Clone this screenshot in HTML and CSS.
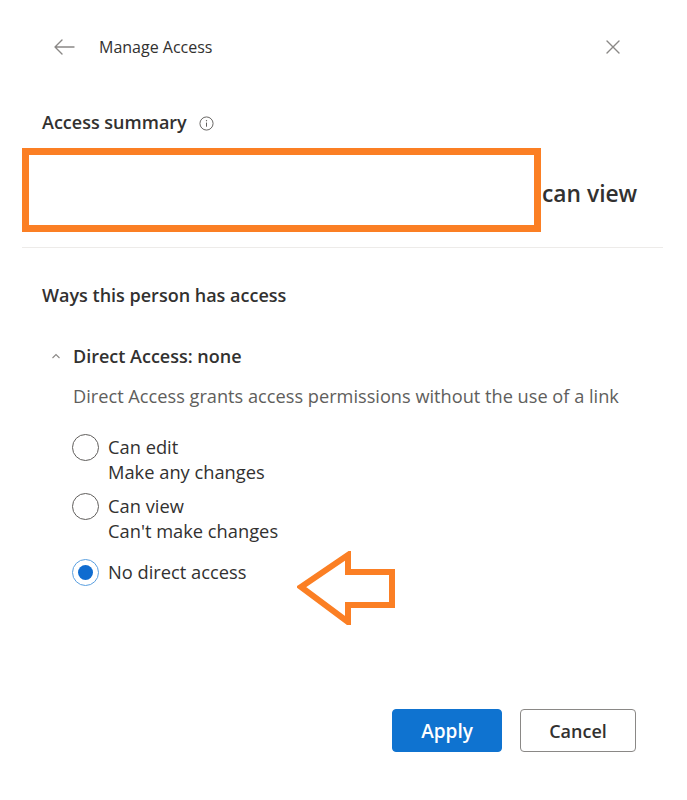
FILE: index.html
```html
<!DOCTYPE html>
<html lang="en">
<head>
<meta charset="utf-8">
<title>Manage Access</title>
<link rel="stylesheet" href="styles.css">
</head>
<body>
<div class="panel">
  <header class="topbar">
    <svg class="back" width="22" height="16" viewBox="0 0 22 16"><path d="M21 8H2M9 1L2 8l7 7" fill="none" stroke="#8a8886" stroke-width="1.4" stroke-linecap="round" stroke-linejoin="round"/></svg>
    <span class="title">Manage Access</span>
    <svg class="close" width="14" height="14" viewBox="0 0 14 14"><path d="M1 1l12 12M13 1L1 13" fill="none" stroke="#8a8886" stroke-width="1.4" stroke-linecap="round"/></svg>
  </header>

  <div class="summary-head">
    <span class="h2">Access summary</span>
    <svg class="info" width="15" height="15" viewBox="0 0 16 16"><circle cx="8" cy="8" r="7" fill="none" stroke="#605e5c" stroke-width="1"/><path d="M8 7v4.4" stroke="#605e5c" stroke-width="1.1"/><circle cx="8" cy="5" r="0.7" fill="#605e5c"/></svg>
  </div>

  <div class="summary-row">
    <div class="redact"></div>
    <span class="perm">can view</span>
  </div>
  <div class="divider"></div>

  <div class="ways">Ways this person has access</div>

  <div class="direct">
    <svg class="chev" width="10" height="6" viewBox="0 0 10 6"><path d="M1.5 5L5 1.5 8.5 5" fill="none" stroke="#8a8886" stroke-width="1.1"/></svg>
    <span class="direct-title">Direct Access: none</span>
  </div>
  <p class="desc">Direct Access grants access permissions without the use of a link</p>

  <div class="options">
    <div class="opt">
      <span class="radio"></span>
      <div class="opt-text"><div>Can edit</div><div>Make any changes</div></div>
    </div>
    <div class="opt">
      <span class="radio"></span>
      <div class="opt-text"><div>Can view</div><div>Can't make changes</div></div>
    </div>
    <div class="opt opt-last">
      <span class="radio checked"></span>
      <div class="opt-text"><div>No direct access</div></div>
      <svg class="callout" width="100" height="74" viewBox="0 0 100 74"><path d="M4 36L51 4V21H95V54H51V71Z" fill="none" stroke="#fb7f24" stroke-width="6" stroke-linejoin="miter"/></svg>
    </div>
  </div>

  <div class="actions">
    <button class="btn primary">Apply</button>
    <button class="btn secondary">Cancel</button>
  </div>
</div>
</body>
</html>
```

FILE: styles.css
```css
* { box-sizing: border-box; }
html, body { margin: 0; background: #fff; }
body {
  font-family: "Open Sans", "Noto Sans", sans-serif;
  color: #323130;
}
.panel {
  width: 687px;
  height: 800px;
  padding: 0 24px 0 22px;
  display: flex;
  flex-direction: column;
}
.topbar {
  display: flex;
  align-items: center;
  height: 30px;
  margin-top: 32px;
  padding-left: 31px;
  padding-right: 43px;
}
.back { flex: none; }
.title {
  margin-left: 24px;
  font-size: 16px;
  font-weight: 500;
}
.close { margin-left: auto; }
.summary-head {
  display: flex;
  align-items: center;
  gap: 12px;
  margin-top: 48px;
  padding-left: 20px;
  height: 24px;
}
.h2 {
  font-size: 18px;
  line-height: 24px;
  font-weight: 600;
}
.info { margin-top: 3px; }
.summary-row {
  display: flex;
  align-items: center;
  margin-top: 14px;
}
.redact {
  width: 519px;
  height: 84px;
  border: 7px solid #fb7f24;
  flex: none;
}
.perm {
  margin-left: 1px;
  margin-top: 6px;
  font-size: 22.8px;
  font-weight: 600;
}
.divider {
  height: 1px;
  background: #edebe9;
  margin-top: 15px;
  width: 641px;
}
.ways {
  margin-top: 35px;
  padding-left: 20px;
  font-size: 18px;
  line-height: 24px;
  font-weight: 600;
}
.direct {
  display: flex;
  align-items: center;
  height: 24px;
  margin-top: 37px;
  padding-left: 29px;
}
.direct-title {
  margin-left: 12px;
  font-size: 18px;
  line-height: 24px;
  font-weight: 600;
}
.desc {
  margin: 16px 0 0 51px;
  font-size: 18.2px;
  line-height: 24px;
  color: #605e5c;
}
.options {
  margin-top: 27px;
  padding-left: 50px;
  display: flex;
  flex-direction: column;
  gap: 10px;
}
.opt {
  display: flex;
  align-items: flex-start;
  gap: 9px;
  font-size: 18.3px;
  line-height: 24.5px;
}
.opt-last {
  position: relative;
  margin-top: 7px;
}
.radio {
  flex: none;
  width: 27px;
  height: 27px;
  border: 1.5px solid #605e5c;
  border-radius: 50%;
  margin-top: -1px;
  position: relative;
}
.radio.checked {
  border-color: #5a9fe0;
}
.radio.checked::after {
  content: "";
  position: absolute;
  left: 4.5px;
  top: 4.5px;
  width: 15px;
  height: 15px;
  border-radius: 50%;
  background: #0f6cd0;
}
.callout {
  position: absolute;
  left: 225px;
  top: -9px;
}
.actions {
  margin-top: auto;
  margin-bottom: 48px;
  display: flex;
  justify-content: flex-end;
  gap: 18px;
  padding-right: 27px;
}
.btn {
  height: 43px;
  border-radius: 4px;
  font-family: inherit;
  font-size: 18px;
  font-weight: 600;
  cursor: pointer;
}
.primary {
  width: 110px;
  background: #0f73d0;
  border: 1px solid #0f73d0;
  color: #fff;
  font-size: 19px;
}
.secondary {
  width: 116px;
  background: #fff;
  border: 1.5px solid #8a8886;
  color: #323130;
}
```
